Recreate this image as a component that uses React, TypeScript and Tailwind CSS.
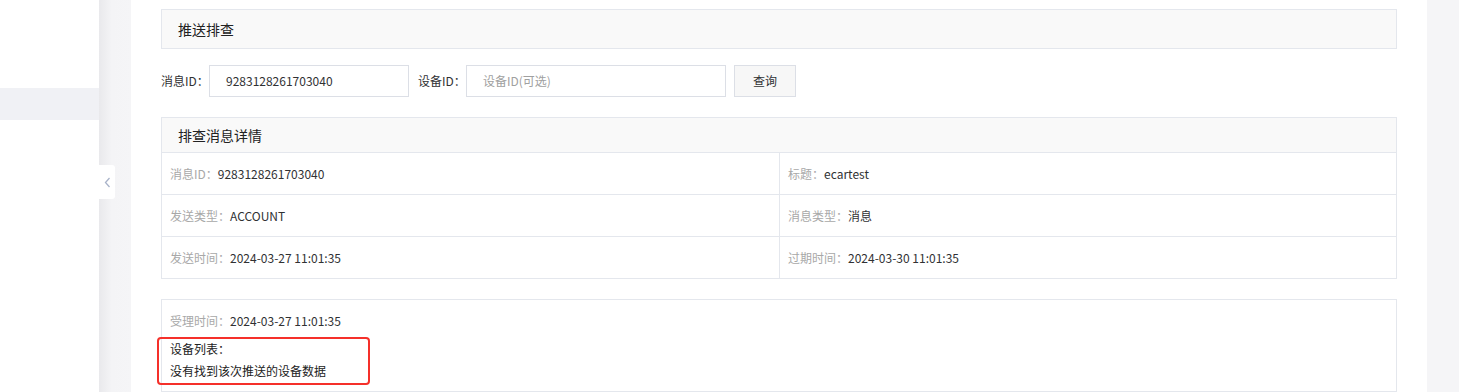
const font = { fontFamily: '"Microsoft YaHei", "Noto Sans CJK SC", "Noto Sans", sans-serif' };

function Cell({ label, value }: { label: string; value: string }) {
  return (
    <div className="flex h-[42px] items-center border-t border-[#e4e7ed] pl-[8px] text-[12px]">
      <span className="text-[#a8a8a8]">{label}：</span>
      <span className="text-[#303133]">{value}</span>
    </div>
  );
}

export default function App() {
  return (
    <div className="flex h-[392px] w-[1459px] overflow-hidden bg-white" style={font}>
      <aside className="w-[99px] shrink-0 bg-white">
        <div className="mt-[88px] h-[32px] bg-[#f0f1f5]" />
      </aside>

      <div className="relative w-[32px] shrink-0 bg-gradient-to-r from-[#e9e9ec] via-[#f4f4f6] via-40% to-[#f5f5f7]">
        <button className="absolute left-0 top-[165px] flex h-[34px] w-[16px] items-center justify-center rounded-r-[3px] bg-white">
          <svg width="7" height="11" viewBox="0 0 7 11" fill="none">
            <path d="M5.5 1 L1.5 5.5 L5.5 10" stroke="#a9b3c9" strokeWidth="1.3" />
          </svg>
        </button>
      </div>

      <main className="flex w-[1296px] shrink-0 flex-col bg-white px-[30px] pt-[9px]">
        <div className="flex h-[40px] items-center border border-[#e4e7ed] bg-[#f9f9f9] pl-[16px] text-[14px] text-[#222]">
          推送排查
        </div>

        <div className="mt-[16px] flex h-[32px] items-center text-[12px] text-[#303133]">
          <span className="w-[48px]">消息ID：</span>
          <div className="flex h-[32px] w-[200px] items-center border border-[#dcdfe6] pl-[16px]">9283128261703040</div>
          <span className="ml-[9px] w-[48px]">设备ID：</span>
          <div className="flex h-[32px] w-[260px] items-center border border-[#dcdfe6] pl-[16px] text-[#a0a0a0]">设备ID(可选)</div>
          <button className="ml-[8px] h-[32px] w-[62px] border border-[#dcdfe6] bg-[#f7f7f7] text-[12px] text-[#303133]">查询</button>
        </div>

        <div className="mt-[20px] border border-[#e4e7ed]">
          <div className="flex h-[34px] items-center bg-[#f9f9f9] pl-[16px] text-[14px] text-[#222]">排查消息详情</div>
          <div className="grid grid-cols-[618px_1fr]">
            <div className="border-r border-[#e4e7ed]">
              <Cell label="消息ID" value="9283128261703040" />
              <Cell label="发送类型" value="ACCOUNT" />
              <Cell label="发送时间" value="2024-03-27 11:01:35" />
            </div>
            <div>
              <Cell label="标题" value="ecartest" />
              <Cell label="消息类型" value="消息" />
              <Cell label="过期时间" value="2024-03-30 11:01:35" />
            </div>
          </div>
        </div>

        <div className="mt-[20px] flex-1 border border-[#e4e7ed] pt-[10px] text-[12px]">
          <div className="flex h-[22px] items-center pl-[8px]">
            <span className="text-[#a8a8a8]">受理时间：</span>
            <span className="text-[#303133]">2024-03-27 11:01:35</span>
          </div>
          <div className="ml-[-5px] mt-[5px] flex w-[213px] flex-col gap-[2px] rounded-[4px] border-2 border-[#f5302a] pb-[2px] pl-[11px] text-[#222]">
            <div className="leading-[20px]">设备列表：</div>
            <div className="leading-[20px]">没有找到该次推送的设备数据</div>
          </div>
        </div>
      </main>

      <div className="flex-1 bg-[#f5f5f7]" />
    </div>
  );
}
